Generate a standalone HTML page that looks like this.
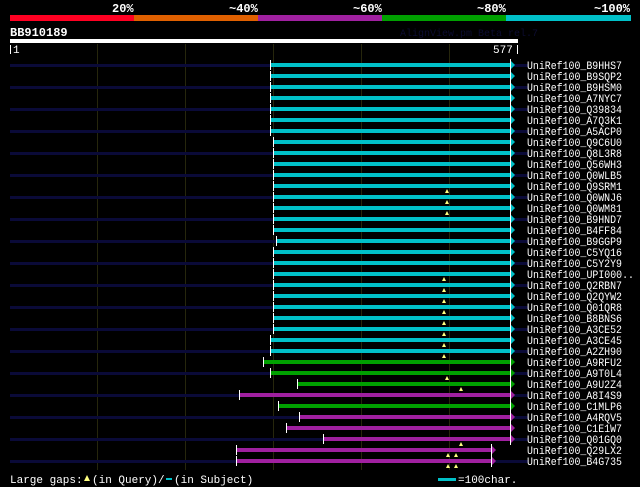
<!DOCTYPE html>
<html><head><meta charset="utf-8"><style>
html,body{margin:0;padding:0;background:#000;width:640px;height:487px;overflow:hidden}
svg{display:block}
text{font-family:"Liberation Mono","DejaVu Sans Mono",monospace;fill:#fff}
</style></head><body>
<svg width="640" height="487" xmlns="http://www.w3.org/2000/svg">
<rect width="640" height="487" fill="#000"/>
<text x="112" y="12" font-size="12" font-weight="bold">20%</text>
<text x="229" y="12" font-size="12" font-weight="bold">~40%</text>
<text x="353" y="12" font-size="12" font-weight="bold">~60%</text>
<text x="477" y="12" font-size="12" font-weight="bold">~80%</text>
<text x="594" y="12" font-size="12" font-weight="bold">~100%</text>
<rect x="10" y="15" width="124" height="6" fill="#ff0022"/>
<rect x="134" y="15" width="124" height="6" fill="#e06000"/>
<rect x="258" y="15" width="124" height="6" fill="#a020a0"/>
<rect x="382" y="15" width="124" height="6" fill="#00a000"/>
<rect x="506" y="15" width="125" height="6" fill="#00c0c8"/>
<text x="10" y="36" font-size="12" font-weight="bold">BB910189</text>
<text x="400" y="36" font-size="10" style="fill:#0c0c30">AlignView.pm Beta rel.7</text>
<rect x="10" y="39" width="508" height="4" fill="#fff"/>
<rect x="10" y="45" width="1" height="9" fill="#fff"/>
<text x="13" y="53" font-size="11">1</text>
<text x="493" y="53" font-size="11">577</text>
<rect x="517" y="45" width="1" height="9" fill="#fff"/>
<g fill="#26260c">
<rect x="97" y="44" width="1" height="426"/><rect x="185" y="44" width="1" height="426"/>
<rect x="273" y="44" width="1" height="426"/><rect x="361" y="44" width="1" height="426"/>
<rect x="449" y="44" width="1" height="426"/>
</g>
<g id="rows"></g>
<text x="10" y="483" font-size="11">Large gaps:</text>
<polygon points="84,481 87,475 90,481" fill="#ffff80"/>
<text x="92" y="483" font-size="11">(in Query)/</text>
<rect x="166" y="478" width="6" height="2" fill="#00c0c8"/>
<text x="174" y="483" font-size="11">(in Subject)</text>
<rect x="438" y="478" width="18" height="3" fill="#00c0c8"/>
<text x="458" y="483" font-size="11">=100char.</text>
</svg>
<script>
var rows=[
["B9HHS7",270,"c",510,[]],["B9SQP2",270,"c",510,[]],["B9HSM0",270,"c",510,[]],["A7NYC7",270,"c",510,[]],
["Q39834",270,"c",510,[]],["A7Q3K1",270,"c",510,[]],["A5ACP0",270,"c",510,[]],["Q9C6U0",273,"c",510,[]],
["Q8L3R8",273,"c",510,[]],["Q56WH3",273,"c",510,[]],["Q0WLB5",273,"c",510,[]],["Q9SRM1",273,"c",510,[447]],
["Q0WNJ6",273,"c",510,[447]],["Q0WM81",273,"c",510,[447]],["B9HND7",273,"c",510,[]],["B4FF84",273,"c",510,[]],
["B9GGP9",276,"c",510,[]],["C5YQ16",273,"c",510,[]],["C5Y2Y9",273,"c",510,[]],["UPI000..",273,"c",510,[444]],
["Q2RBN7",273,"c",510,[444]],["Q2QYW2",273,"c",510,[444]],["Q01QR8",273,"c",510,[444]],["B8BNS6",273,"c",510,[444]],
["A3CE52",273,"c",510,[444]],["A3CE45",270,"c",510,[444]],["A2ZH90",270,"c",510,[444]],["A9RFU2",263,"g",510,[]],
["A9T0L4",270,"g",510,[447]],["A9U2Z4",297,"g",510,[461]],["A8I4S9",239,"p",510,[]],["C1MLP6",278,"g",510,[]],
["A4RQV5",299,"p",510,[]],["C1E1W7",286,"p",510,[]],["Q01GQ0",323,"p",510,[461]],["Q29LX2",236,"p",491,[448,456]],
["B4G735",236,"p",491,[448,456]]];
var col={c:"#00c0c8",g:"#00a000",p:"#a020a0"};
var s="";
rows.forEach(function(r,i){
 var y=65+i*11,c=col[r[2]];
 if(i%2==0) s+='<rect x="10" y="'+(y-1)+'" width="518" height="3" fill="#0a0a38"/>';
 s+='<rect x="'+r[1]+'" y="'+(y-2)+'" width="'+(r[3]-r[1])+'" height="4" fill="'+c+'"/>';
 s+='<rect x="'+r[1]+'" y="'+(y-5)+'" width="1" height="10" fill="#fff"/>';
 s+='<polygon points="'+r[3]+','+(y-5)+' '+(r[3]+5)+','+y+' '+r[3]+','+(y+5)+'" fill="'+c+'"/>';
 s+='<rect x="'+r[3]+'" y="'+(y-6)+'" width="1" height="12" fill="#fff"/>';
 r[4].forEach(function(m){s+='<polygon points="'+(m-2)+','+(y+7)+' '+m+','+(y+3)+' '+(m+2)+','+(y+7)+'" fill="#ffff80"/>';});
 var t='UniRef100_'+r[0];
 s+='<text x="527" y="'+(y+4)+'" font-size="11" textLength="'+(t.length*6-1)+'" lengthAdjust="spacingAndGlyphs">'+t+'</text>';
});
document.getElementById("rows").innerHTML=s;
</script>
</body></html>
